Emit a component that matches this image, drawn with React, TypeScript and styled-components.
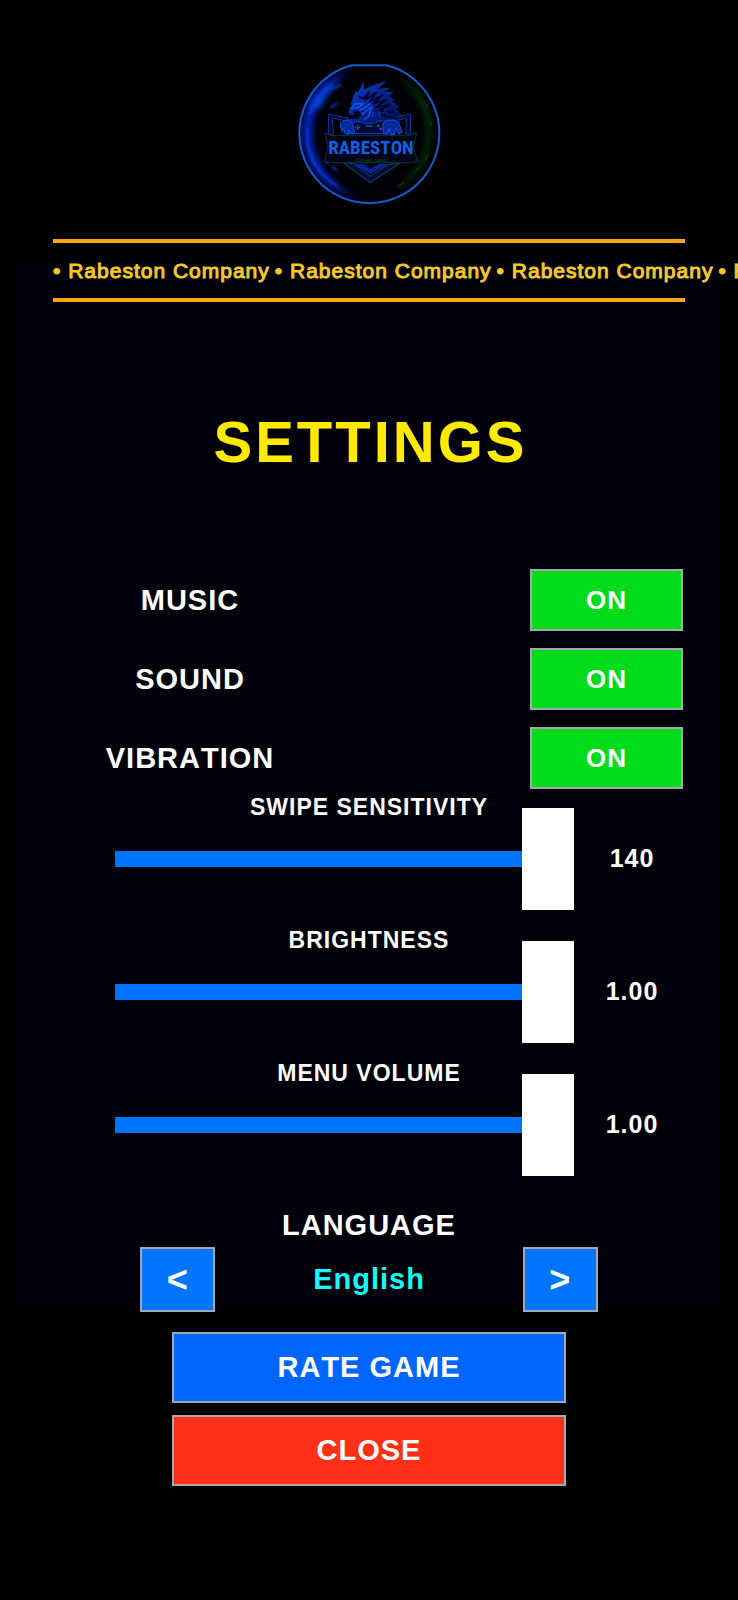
import * as React from 'react';
import styled, { createGlobalStyle } from 'styled-components';

const GlobalStyle = createGlobalStyle`
  * {
    box-sizing: border-box;
  }

  body {
    margin: 0;
    background: #000;
  }

  body, button, input {
    font-family: 'Liberation Sans', Arial, sans-serif;
    font-kerning: none;
  }
`;

/**
 * Page container. The dark blue panel stands behind the middle of the content.
 */
const Page = styled.main`
  display: flex;
  flex-direction: column;
  align-items: center;
  min-height: 100vh;
  padding: 54px 0 80px;
  overflow-x: hidden;
  color: #fff;
  background: linear-gradient(#00000b, #00000b) no-repeat center 258px / calc(100% - 32px) 1046px;
`;

const Logo = styled.svg`
  display: block;
  width: 160px;
  height: 160px;
`;

/**
 * Company ticker between two orange lines.
 */
const Ticker = styled.div`
  display: flex;
  align-self: stretch;
  gap: 5px;
  margin: 25px 53px 0;
  border-top: 4px solid #f5a516;
  border-bottom: 4px solid #f5a516;
  color: #f5c928;
  font-size: 21px;
  line-height: 55px;
  letter-spacing: 1px;
  white-space: nowrap;
  -webkit-text-stroke: 1px #f5c928;
`;

const TickerItem = styled.span`
  flex: none;
`;

const Title = styled.h1`
  margin: 108px 0 95px;
  color: #ffea00;
  font-size: 58px;
  font-weight: 700;
  line-height: 64px;
  letter-spacing: 3px;
  text-indent: 3px;
`;

const Toggles = styled.section`
  display: flex;
  flex-direction: column;
  align-self: stretch;
  gap: 17px;
  padding: 0 55px 0 54px;
`;

const ToggleRow = styled.div`
  display: flex;
  align-items: center;
  justify-content: space-between;
`;

/**
 * Bold text used by labels and values.
 * @param {number} size font size in pixels
 * @param {string} tint text color
 */
const Text = styled.span<{ size: number; tint?: string }>`
  color: ${props => props.tint || '#fff'};
  font-size: ${props => props.size}px;
  font-weight: 700;
  line-height: ${props => props.size + 4}px;
  letter-spacing: 1px;
  text-align: center;
`;

const ToggleLabel = styled(Text)`
  width: 272px;
`;

/**
 * Flat button with a thin grey frame.
 */
const Button = styled.button<{ fill: string; size: number }>`
  padding: 0;
  border: 2px solid #a3a9b3;
  color: #fff;
  background: ${props => props.fill};
  font-size: ${props => props.size}px;
  font-weight: 700;
  letter-spacing: 1px;
  cursor: pointer;
`;

const ToggleButton = styled(Button)`
  width: 153px;
  height: 62px;
`;

const ArrowButton = styled(Button)`
  width: 75px;
  height: 65px;
`;

const WideButton = styled(Button)`
  width: 100%;
  height: 71px;
`;

const Sliders = styled.section`
  display: flex;
  flex-direction: column;
  align-self: stretch;
  gap: 54px;
  margin-top: 5px;
`;

const SliderBlock = styled.div`
  display: flex;
  flex-direction: column;
  gap: 23px;
`;

const SliderRow = styled.div`
  display: flex;
  align-items: center;
  padding: 0 48px 0 115px;
`;

const SliderLabel = styled(Text).attrs({ as: 'label' })<{ htmlFor: string }>`
  display: block;
`;

const SliderValue = styled(Text)`
  width: 116px;
`;

const Range = styled.input`
  flex: 1;
  min-width: 0;
  height: 16px;
  margin: 0;
  appearance: none;
  background: linear-gradient(#0075ff, #0075ff) no-repeat left / var(--fill) 100% #1a1a2a;
  cursor: pointer;

  &::-webkit-slider-runnable-track {
    height: 16px;
  }

  &::-webkit-slider-thumb {
    appearance: none;
    width: 52px;
    height: 102px;
    margin-top: -43px;
    background: #fff;
  }
`;

const LanguageRow = styled.div`
  display: flex;
  align-items: center;
  justify-content: space-between;
  width: 62%;
  margin-top: 5px;
`;

const LanguageTitle = styled(Text)`
  margin-top: 70px;
`;

const Actions = styled.div`
  display: flex;
  flex-direction: column;
  gap: 12px;
  width: 394px;
  max-width: 90%;
  margin-top: 20px;
`;

/**
 * Round company badge: dragon over a shield with the name plate.
 */
const CompanyLogo: React.FunctionComponent = (): JSX.Element => (
  <Logo viewBox="0 0 480 480" role="img" aria-label="Rabeston Company Games">
    <defs>
      <filter id="glow" x="-20%" y="-20%" width="140%" height="140%">
        <feGaussianBlur stdDeviation="9" />
      </filter>
      <filter id="soft">
        <feGaussianBlur stdDeviation="3" />
      </filter>
      <linearGradient id="scales" x1="0" y1="0" x2="1" y2="1">
        <stop offset="0" stopColor="#0b46dd" />
        <stop offset="0.5" stopColor="#061f8c" />
        <stop offset="1" stopColor="#020a3c" />
      </linearGradient>
    </defs>
    <circle cx="241" cy="238" r="207" fill="#000006" />
    <path d="M190 50C90 70 30 150 42 260C52 350 120 410 200 430C120 385 72 320 70 245C68 165 110 90 190 50Z" fill="#0424b8" filter="url(#glow)" />
    <path d="M66 165Q90 105 152 80Q105 125 92 160Z" fill="#0a4df0" filter="url(#glow)" />
    <path d="M320 66C400 95 434 170 425 258C416 335 370 388 310 412C375 365 412 310 413 245C414 170 382 105 320 66Z" fill="#02380e" filter="url(#glow)" />
    <path
      d="M60 180Q82 122 130 90M55 220Q50 300 92 352M66 300Q90 365 145 396M120 108L158 92M124 162L146 146M128 338L145 350M110 320L118 330"
      fill="none"
      stroke="#0b42e8"
      strokeWidth="7"
      opacity="0.7"
      filter="url(#soft)"
    />
    <path d="M412 150l5 10M424 200l3 14M417 300l-8 20M390 340l-12 14M345 385l-20 12" stroke="#055018" strokeWidth="3" fill="none" />
    <path d="M189 34H293A210 210 0 1 1 189 34Z" fill="none" stroke="#145dce" strokeWidth="6" />

    {/* shield */}
    <path d="M119 181L178 192L172 201L130 192L134 242H118ZM365 181L316 188L322 199L353 192L350 240H364Z" fill="#020a30" stroke="#0a3694" strokeWidth="3" />
    <path d="M162 326L243 386L334 327L300 330L243 367L194 328Z" fill="#030d38" stroke="#08505c" strokeWidth="3" />
    <path d="M194 330L243 360L298 330L270 330L243 345L222 330Z" fill="#0822a0" />

    {/* dragon */}
    <path
      d="M180 174L190 152L186 152L194 127L202 111L206 119L224 85L224 109L242 98L288 83L263 106L299 103L282 115L311 115L297 127L314 138L306 142L329 160L318 162L339 189L326 187L333 205L318 229H172L164 200L187 195L207 196L215 185L202 178L190 183L181 180Z"
      fill="url(#scales)"
      stroke="#0a34b0"
      strokeWidth="2"
      strokeLinejoin="round"
    />
    <path d="M208 126L222 134L243 112L228 138L264 113L241 144L281 123L252 150L294 137L260 160L304 152L268 170L315 174L276 183L321 194" fill="none" stroke="#020723" strokeWidth="5" />
    <path d="M183 168L196 150L223 149L209 160L190 164M211 169L229 160L245 149M215 186L232 170L248 159L240 185L224 199" fill="none" stroke="#135bec" strokeWidth="4" />
    <path d="M252 172L249 190M269 170L273 190M286 168L298 184" fill="none" stroke="#0c3cc0" strokeWidth="3" />
    <path d="M190 173L209 171L220 187L203 183Z" fill="#000312" />

    {/* claws and gamepad */}
    <path d="M191 204Q211 199 228 208H255Q279 192 292 208L299 239H171Z" fill="#020a35" stroke="#0b43cc" strokeWidth="3" />
    <path
      d="M155 220Q150 204 166 200Q183 193 190 209L197 234L190 242L177 228L179 241L169 240L164 222L160 234ZM282 214Q284 195 303 199Q323 194 331 211L339 235L330 241L319 221L317 241L305 242L300 222L293 242L283 236Z"
      fill="#062a9a"
      stroke="#1252e2"
      strokeWidth="3"
    />
    <path d="M206 213v16M198 221h16M232 216h18" stroke="#136089" strokeWidth="4" />
    <circle cx="268" cy="216" r="4" fill="#05723f" />
    <circle cx="275" cy="225" r="4" fill="#1255c8" />

    {/* name plate */}
    <path d="M109 237L128 245H357L383 237L373 281L386 323L351 326H132L105 322L117 281Z" fill="#000417" stroke="#06353f" strokeWidth="3" />
    <text
      x="246"
      y="300"
      textAnchor="middle"
      fontFamily="'Roboto Condensed', 'Liberation Sans Narrow', 'Liberation Sans', sans-serif"
      fontWeight="700"
      fontSize="57"
      fill="#1260e5"
    >
      RABESTON
    </text>
    <text x="246" y="323" textAnchor="middle" fontFamily="'Liberation Sans', sans-serif" fontWeight="700" fontSize="11" fill="#053f26">
      COMPANY GAMES
    </text>
  </Logo>
);

/**
 * Toggle setting props
 */
interface ToggleSettingProps {
  /** name of the setting */
  label: string;
}

const ToggleSetting: React.FunctionComponent<ToggleSettingProps> = ({ label }): JSX.Element => {
  const [on, setOn] = React.useState(true);
  const id = `toggle-${label.toLowerCase()}`;

  return (
    <ToggleRow>
      <ToggleLabel id={id} size={29}>
        {label}
      </ToggleLabel>
      <ToggleButton fill={on ? '#00dc1a' : '#ff2f18'} size={26} aria-labelledby={id} aria-pressed={on} onClick={() => setOn(!on)}>
        {on ? 'ON' : 'OFF'}
      </ToggleButton>
    </ToggleRow>
  );
};

/**
 * Slider setting props
 */
interface SliderSettingProps {
  /** input id */
  id: string;
  /** name of the setting */
  label: string;
  /** highest value, also the starting one */
  max: number;
  /** decimals shown in the value */
  digits: number;
}

const SliderSetting: React.FunctionComponent<SliderSettingProps> = ({ id, label, max, digits }): JSX.Element => {
  const [value, setValue] = React.useState(max);
  const fill = { '--fill': `${(value / max) * 100}%` } as React.CSSProperties;

  return (
    <SliderBlock>
      <SliderLabel htmlFor={id} size={23}>
        {label}
      </SliderLabel>
      <SliderRow>
        <Range
          id={id}
          type="range"
          min={0}
          max={max}
          step={digits ? 0.01 : 1}
          value={value}
          style={fill}
          onChange={event => setValue(Number(event.target.value))}
        />
        <SliderValue size={25}>{value.toFixed(digits)}</SliderValue>
      </SliderRow>
    </SliderBlock>
  );
};

const languages = ['English', 'Deutsch', 'Français', 'Español'];

/**
 * Game settings screen.
 */
const App: React.FunctionComponent = (): JSX.Element => {
  const [language, setLanguage] = React.useState(0);
  const move = (step: number) => setLanguage((language + step + languages.length) % languages.length);

  return (
    <Page>
      <GlobalStyle />
      <CompanyLogo />
      <Ticker>
        {[0, 1, 2, 3].map(item => (
          <TickerItem key={item}>• Rabeston Company</TickerItem>
        ))}
      </Ticker>
      <Title>SETTINGS</Title>
      <Toggles>
        <ToggleSetting label="MUSIC" />
        <ToggleSetting label="SOUND" />
        <ToggleSetting label="VIBRATION" />
      </Toggles>
      <Sliders>
        <SliderSetting id="swipe" label="SWIPE SENSITIVITY" max={140} digits={0} />
        <SliderSetting id="brightness" label="BRIGHTNESS" max={1} digits={2} />
        <SliderSetting id="volume" label="MENU VOLUME" max={1} digits={2} />
      </Sliders>
      <LanguageTitle size={29}>LANGUAGE</LanguageTitle>
      <LanguageRow>
        <ArrowButton fill="#0075ff" size={36} aria-label="Previous language" onClick={() => move(-1)}>
          &lt;
        </ArrowButton>
        <Text size={29} tint="#14fbf5">
          {languages[language]}
        </Text>
        <ArrowButton fill="#0075ff" size={36} aria-label="Next language" onClick={() => move(1)}>
          &gt;
        </ArrowButton>
      </LanguageRow>
      <Actions>
        <WideButton fill="#0066ff" size={29}>
          RATE GAME
        </WideButton>
        <WideButton fill="#ff2f18" size={29}>
          CLOSE
        </WideButton>
      </Actions>
    </Page>
  );
};

export default App;
